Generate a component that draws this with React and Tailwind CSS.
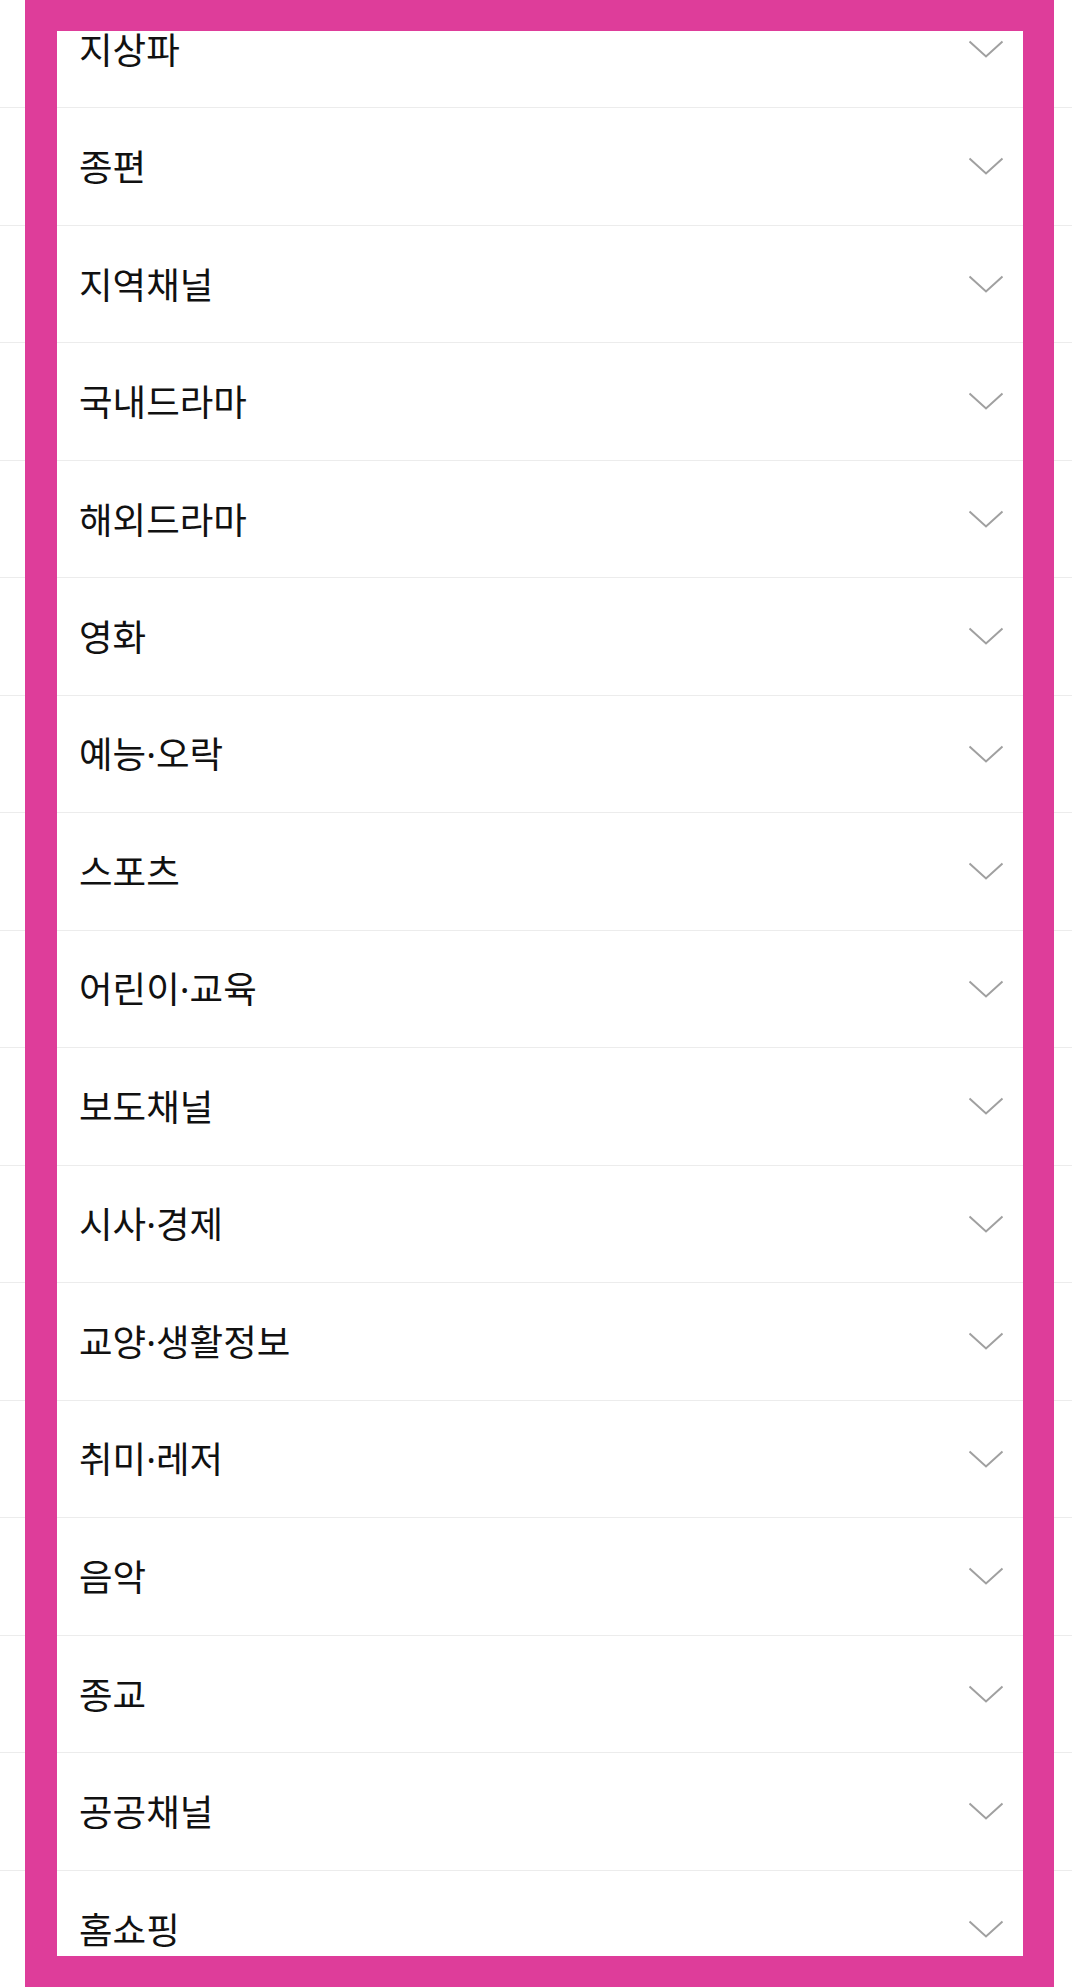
import React from 'react';

const categories = [
  '지상파',
  '종편',
  '지역채널',
  '국내드라마',
  '해외드라마',
  '영화',
  '예능·오락',
  '스포츠',
  '어린이·교육',
  '보도채널',
  '시사·경제',
  '교양·생활정보',
  '취미·레저',
  '음악',
  '종교',
  '공공채널',
  '홈쇼핑',
];

const Chevron = () => (
  <svg width="36" height="18" viewBox="0 0 36 18" fill="none">
    <polyline points="1.5,1.5 18,16.5 34.5,1.5" stroke="#a0a0a0" strokeWidth="2" strokeLinejoin="miter" />
  </svg>
);

// the middle dot in the CJK font is full width; the reference uses a narrow one
const Label = ({ text }) => {
  const parts = text.split('·');
  return (
    <span className="text-[36.5px] text-[#111111] leading-none">
      {parts.map((p, i) => (
        <React.Fragment key={i}>
          {i > 0 && <span style={{ fontFamily: '"Noto Sans", sans-serif' }}>·</span>}
          {p}
        </React.Fragment>
      ))}
    </span>
  );
};

export default function App() {
  return (
    <div
      className="relative w-[1072px] h-[1987px] overflow-hidden bg-white"
      style={{ fontFamily: '"Noto Sans CJK KR", "Noto Sans", sans-serif' }}
    >
      <ul className="-mt-[9.5px]">
        {categories.map((name) => (
          <li
            key={name}
            className="h-[117.5px] flex items-center justify-between pl-[79px] pr-[68px] border-b border-[#ececec]"
          >
            <Label text={name} />
            <Chevron />
          </li>
        ))}
      </ul>

      {/* highlight frame over the list */}
      <div className="absolute top-0 bottom-0 left-[25px] right-[18px] border-[#de3d9a] border-t-[31px] border-b-[31px] border-l-[32px] border-r-[31px] pointer-events-none" />
    </div>
  );
}
